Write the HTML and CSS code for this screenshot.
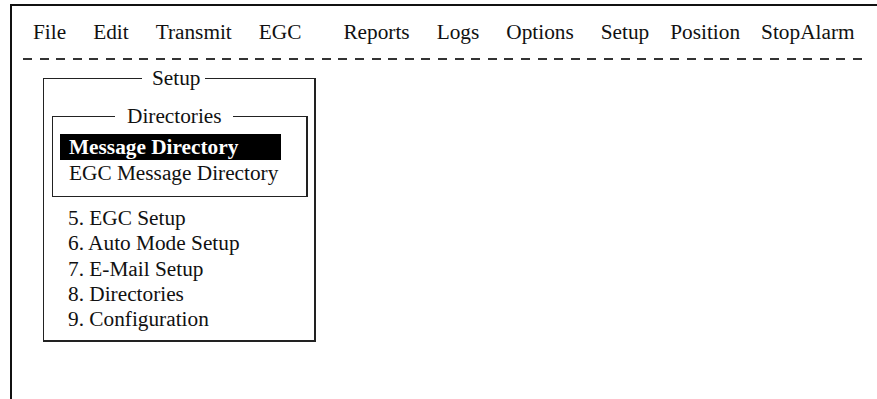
FILE: index.html
```html
<!DOCTYPE html>
<html lang="en">
<head>
	<meta charset="UTF-8">
	<title>Setup - Directories</title>
	<link rel="stylesheet" href="styles.css">
</head>
<body>
	<div class="screen">
		<ul class="menubar">
			<li>File</li>
			<li>Edit</li>
			<li>Transmit</li>
			<li class="wide">EGC</li>
			<li>Reports</li>
			<li>Logs</li>
			<li>Options</li>
			<li class="tight">Setup</li>
			<li class="tight">Position</li>
			<li>StopAlarm</li>
		</ul>
		<div class="dashes"></div>

		<fieldset class="setup">
			<legend>Setup</legend>
			<fieldset class="dirs">
				<legend>Directories</legend>
				<div class="sel">Message Directory</div>
				<div class="opt">EGC Message Directory</div>
			</fieldset>
			<ol class="items">
				<li>5. EGC Setup</li>
				<li>6. Auto Mode Setup</li>
				<li>7. E-Mail Setup</li>
				<li>8. Directories</li>
				<li>9. Configuration</li>
			</ol>
		</fieldset>
	</div>
</body>
</html>
```

FILE: styles.css
```css
*{margin: 0; padding: 0; box-sizing: border-box;}
body{
	background: #fff;
	color: #111;
	font-family: "Liberation Serif", "Times New Roman", serif;
	font-size: 21.3px;
	overflow: hidden;
}
.screen{
	margin: 4px 0 0 10px;
	height: 395px;
	border-top: 2px solid #111;
	border-left: 2px solid #111;
}
.menubar{
	list-style: none;
	display: flex;
	gap: 27px;
	padding: 14px 0 0 21px;
	line-height: 25px;
}
.menubar li.wide{
	margin-right: 15px;
}
.menubar li.tight{
	margin-right: -6px;
}
.dashes{
	margin: 13px 0 0 11px;
	width: 841px;
	height: 2px;
	background: repeating-linear-gradient(90deg, #333 0 9px, transparent 9px 16.6px);
}
fieldset{
	border: 1px solid #222;
}
legend{
	line-height: 25px;
}
.setup{
	width: 273px;
	margin: 6px 0 0 31px;
	padding: 13px 6px 8px 8px;
	border-right-width: 2px;
	border-bottom-width: 2px;
}
.setup > legend{
	margin-left: 90px;
	padding: 0 4px 0 10px;
}
.dirs{
	padding: 5px 0 10px 7px;
	border-right-width: 2px;
}
.dirs > legend{
	margin-left: 55px;
	padding: 0 11px 0 12px;
}
.dirs div{
	line-height: 26px;
	padding-left: 9px;
}
.dirs .sel{
	width: 221px;
	background: #000;
	color: #fff;
	font-weight: bold;
}
.items{
	list-style: none;
	padding: 9px 0 0 16px;
	line-height: 25.3px;
}
```
